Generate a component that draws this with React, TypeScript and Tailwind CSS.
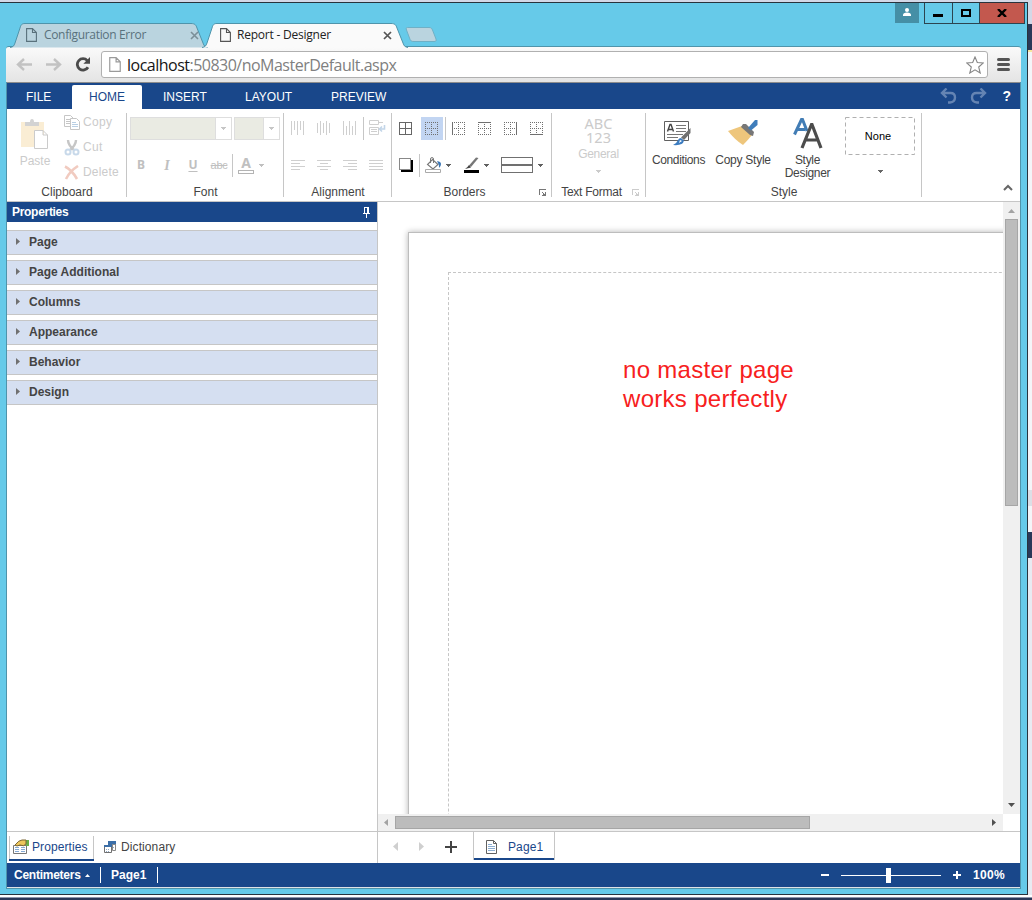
import type { ReactNode } from 'react';

const Arrow = ({ className = '' }: { className?: string }) => (
  <svg className={`shrink-0 ${className}`} width="5" height="3" viewBox="0 0 5 3" fill="currentColor" shapeRendering="crispEdges">
    <path d="M0 0h5v1h-5zM1 1h3v1h-3zM2 2h1v1h-1z" />
  </svg>
);

const Launcher = ({ className = '' }: { className?: string }) => (
  <svg className={`shrink-0 ${className}`} width="8" height="7" viewBox="0 0 8 7" fill="currentColor" shapeRendering="crispEdges">
    <path d="M0 0h7v1h-6v5h-1zM3 3h1v1h-1zM4 4h1v1h-1zM7 3v4h-4v-1h1v-1h2v-2z" />
  </svg>
);

const TabShape = ({ width, fill }: { width: number; fill: string }) => (
  <svg className="absolute left-0 top-0" width={width} height="25" fill="none">
    <path
      d={`M0 24.5 C3 24 4 23 5 20 L10 5 C11 1.5 12 .5 15 .5 H${width - 17} C${width - 13} .5 ${width - 12} 2 ${width - 11} 5 L${width - 5} 20 C${width - 4} 23 ${width - 3} 24 ${width} 24.5`}
      fill={fill}
      stroke="#4f94ab"
    />
  </svg>
);

const FileIcon = ({ className = '', w = 11, h = 14 }: { className?: string; w?: number; h?: number }) => (
  <svg className={`shrink-0 ${className}`} width={w} height={h} viewBox="0 0 11 14" fill="none" stroke="currentColor" strokeWidth="1.1">
    <path d="M.6.6H6.5L10.4 4.5V13.4H.6zM6.5.6V4.5H10.4" />
  </svg>
);

const Group = ({ width, label, pad = '', children }: { width: string; label: ReactNode; pad?: string; children: ReactNode }) => (
  <div className={`relative flex h-[84px] shrink-0 flex-col border-r border-[#c6c6c6] ${width}`}>
    <div className="h-[72px] shrink-0">{children}</div>
    <div className={`flex h-[14px] shrink-0 items-center justify-center pl-[1px] leading-[14px] ${pad}`}>{label}</div>
  </div>
);

const Sep = ({ className = '' }: { className?: string }) => <div className={`h-[23px] w-px shrink-0 self-start bg-[#c6c6c6] ${className}`} />;

const dots = 'M0 0h1v1h-1zM2 0h1v1h-1zM4 0h1v1h-1zM6 0h1v1h-1zM8 0h1v1h-1zM10 0h1v1h-1zM12 0h1v1h-1z';

// which: edge that is drawn solid, the others stay dotted
const BorderIcon = ({ which = '', className = '' }: { which?: string; className?: string }) => (
  <svg className={`shrink-0 ${className}`} width="13" height="13" viewBox="0 0 13 13" fill="#707070" shapeRendering="crispEdges">
    {[0, 6, 12].map((n) => (
      <g key={n}>
        <path d={dots} transform={`translate(0 ${n})`} />
        <path d={dots} transform={`translate(${n} 0) matrix(0 1 1 0 0 0)`} />
      </g>
    ))}
    {which === 'left' && <path d="M0 0h1v13h-1z" />}
    {which === 'right' && <path d="M12 0h1v13h-1z" />}
    {which === 'top' && <path d="M0 0h13v1h-13z" />}
    {which === 'bottom' && <path d="M0 12h13v1h-13z" />}
  </svg>
);

const AlignIcon = ({ d, className = '' }: { d: string; className?: string }) => (
  <svg className={`shrink-0 ${className}`} width="14" height="14" viewBox="0 0 14 14" stroke="#cfcfcf" fill="none" shapeRendering="crispEdges">
    <path d={d} />
  </svg>
);

const sections = ['Page', 'Page Additional', 'Columns', 'Appearance', 'Behavior', 'Design'];

const TitleBar = () => (
  <div className="relative flex h-[43px] items-start">
    <div className="relative mt-5 ml-[4px] flex h-6 w-[198px] items-center text-[#59717c]">
      <TabShape width={198} fill="#bad4df" />
      <FileIcon className="relative ml-[16px]" />
      <span className="relative ml-[7px] w-[151px] text-[12px] tracking-[-0.33px]">Configuration Error</span>
      <svg className="absolute left-[180px] top-2" width="9" height="9" stroke="#7b8f98" strokeWidth="1.6"><path d="M1 1L8 8M8 1L1 8" /></svg>
    </div>
    <div className="relative mt-5 ml-[-6px] flex h-6 w-[206px] items-center text-[#222]">
      <TabShape width={206} fill="#fafafa" />
      <FileIcon className="relative ml-[18px] text-[#555]" />
      <span className="relative ml-[6px] text-[12px] tracking-[-0.22px]">Report - Designer</span>
      <svg className="absolute left-[181px] top-2" width="9" height="9" stroke="#555" strokeWidth="1.7"><path d="M1 1L8 8M8 1L1 8" /></svg>
    </div>
    <svg className="mt-[23px] ml-[-4px]" width="34" height="17" fill="#bad4df" stroke="#6fb0c6">
      <path d="M3.500 1.500 H25 C27 1.500 27.500 2 28.500 4 L32 13 C32.500 15 32 15.500 30 15.500 H10 C7 15.500 6.500 15 5.500 12 L2.500 4 C2 2.500 2 1.500 3.500 1.500z" />
    </svg>
    <div className="mr-px ml-auto flex h-[21px]">
      <div className="mr-[5px] flex h-5 w-6 justify-center bg-[#458fa6] pt-[5px]">
        <svg width="10" height="8" fill="white"><circle cx="5" cy="2" r="2" /><path d="M1 8V7Q1 4.5 5 4.5T9 7V8z" /></svg>
      </div>
      <div className="flex w-[29px] justify-center border border-t-0 border-[#2c4450]"><div className="mt-[11px] mr-[2px] h-[3px] w-[10px] bg-black" /></div>
      <div className="flex w-[26px] justify-center border-b border-[#2c4450]"><div className="mt-[6px] h-2 w-[10px] border-2 border-black" /></div>
      <div className="mr-[1px] flex w-[46px] justify-center border border-t-0 border-[#2c4450] bg-[#c3584e]">
        <svg className="mt-[6px] mr-[1px]" width="10" height="8" stroke="black" strokeWidth="2.4"><path d="M1 0L9 8M9 0L1 8" /></svg>
      </div>
    </div>
  </div>
);

const AddressBar = () => (
  <div className="mr-1.5 flex h-9 items-center rounded-t-[3px] border-t border-[#4f94ab] bg-gradient-to-b from-[#fafafa] to-[#e4e4e4] pl-[10px]">
    <svg width="16" height="13" fill="none" stroke="#c2c2c2" strokeWidth="2.4"><path d="M16 6.5H2M8 1L2 6.5L8 12" /></svg>
    <svg className="ml-[14px]" width="16" height="13" fill="none" stroke="#c2c2c2" strokeWidth="2.4"><path d="M0 6.5H14M8 1L14 6.5L8 12" /></svg>
    <svg className="ml-[13px]" width="16" height="15" fill="none" stroke="#4b4b4b" strokeWidth="2.8">
      <path d="M13 10.2A5.7 5.7 0 1 1 12.3 3.6" /><path d="M15 0V6.8H8.4z" fill="#4b4b4b" stroke="none" />
    </svg>
    <div className="ml-[10px] flex h-[27px] w-[887px] items-center rounded-[3px] border border-[#b0b0b0] bg-white pl-[7px]">
      <FileIcon className="text-[#9a9a9a]" w={12} h={15} />
      <span className="ml-[6px] text-[16px] tracking-[-0.51px] text-[#808080]"><span className="text-[#151515]">localhost</span>:50830/noMasterDefault.aspx</span>
      <svg className="mr-[3px] ml-auto" width="18" height="18" fill="white" stroke="#858585" strokeWidth="1.1">
        <path d="M9 1L11.3 6.5L17.3 7L12.7 11L14.2 17L9 13.8L3.8 17L5.3 11L.7 7L6.7 6.5z" />
      </svg>
    </div>
    <div className="ml-[9px] flex flex-col gap-[2px]">
      <div className="h-[3px] w-[13px] rounded-sm bg-[#555]" />
      <div className="h-[3px] w-[13px] rounded-sm bg-[#555]" />
      <div className="h-[3px] w-[13px] rounded-sm bg-[#555]" />
    </div>
  </div>
);

const MenuBar = () => (
  <div className="flex h-[27px] border-t border-[#8c8c8c] bg-[#19478a] text-white">
    <span className="w-[65px] pl-[19px] leading-[28px]">FILE</span>
    <span className="mt-0.5 w-[70px] rounded-t-[2px] bg-white pl-[17px] leading-[25px] text-[#19478a]">HOME</span>
    <span className="w-[82px] pl-[21px] leading-[28px]">INSERT</span>
    <span className="w-[86px] pl-[21px] leading-[28px]">LAYOUT</span>
    <span className="pl-[21px] leading-[28px]">PREVIEW</span>
    <svg className="mt-[5px] ml-auto" width="17" height="16" fill="none" stroke="#6484b3" strokeWidth="2.4">
      <path d="M2 5H10.5Q15 5 15 9.5T10 14.5H8M6.5 .5L2 5L6.5 9.5" />
    </svg>
    <svg className="mt-[5px] ml-[13px]" width="17" height="16" fill="none" stroke="#6484b3" strokeWidth="2.4">
      <path d="M15 5H6.5Q2 5 2 9.5T7 14.5H9M10.5 .5L15 5L10.5 9.5" />
    </svg>
    <span className="mr-[9px] ml-[15px] text-[14px] leading-[27px] font-bold">?</span>
  </div>
);

const Clipboard = () => (
  <Group width="w-[120px]" label="Clipboard">
    <div className="flex text-[#cbcbcb]">
      <div className="flex w-[56px] flex-col items-center">
        <svg className="mt-[6px] mr-[1px]" width="28" height="32" viewBox="0 0 28 32">
          <path d="M0 3H23V28H0z" fill="#faedd4" />
          <path d="M4 3H9Q9 0 11 0T13 3H18V7H4z" fill="#d3d3d3" />
          <path d="M13.500 11.500H22L26.500 16V29.500H13.500zM22 11.500V16H26.500" fill="white" stroke="#cbcbcb" />
        </svg>
        <span className="mt-[2px] leading-4">Paste</span>
      </div>
      <div className="flex flex-col pl-[1px]">
        <div className="flex h-[18px] items-center">
          <svg width="16" height="15" fill="white" stroke="#c6c6c6">
            <path d="M.5.5H6.500L9.500 3.500V11.500H.5zM2 4.500H7M2 6.500H7M2 8.500H7" />
            <path d="M6.500 3.500H12.500L15.500 6.500V14.500H6.500z" /><path d="M8 7.500H12M8 9.500H14M8 11.500H14" stroke="#b9cfe4" />
          </svg>
          <span className="ml-[3px] tracking-[0.3px]">Copy</span>
        </div>
        <div className="mt-[7px] flex h-[18px] items-center">
          <svg width="16" height="17" fill="none" strokeWidth="2">
            <path d="M4 1Q4 6 10.500 11.500M12 1Q12 6 5.500 11.500" stroke="#c6c6c6" strokeWidth="2.400" />
            <circle cx="4" cy="13" r="2.500" stroke="#c8d9ea" /><circle cx="12" cy="13" r="2.500" stroke="#c8d9ea" />
          </svg>
          <span className="ml-[3px] tracking-[0.3px]">Cut</span>
        </div>
        <div className="mt-[7px] flex h-[18px] items-center">
          <svg width="16" height="15" fill="none" stroke="#f1cbc0" strokeWidth="2.600"><path d="M1 1.500Q8 5 13 14M14 1Q6 6 2 14" /></svg>
          <span className="ml-[3px] tracking-[0.2px]">Delete</span>
        </div>
      </div>
    </div>
  </Group>
);

const FontGroup = () => (
  <Group width="w-[157px]" label="Font">
    <div className="flex gap-[2px] pt-[4px] pl-[3px] text-[#c6c6c6]">
      <div className="flex h-[23px] w-[102px] justify-end border border-[#dedede] bg-[#eaebe3]">
        <div className="flex w-4 items-center justify-center border-l border-[#dedede] bg-white"><Arrow /></div>
      </div>
      <div className="flex h-[23px] w-[46px] justify-end border border-[#dedede] bg-[#eaebe3]">
        <div className="flex w-4 items-center justify-center border-l border-[#dedede] bg-white"><Arrow /></div>
      </div>
    </div>
    <div className="mt-[14px] flex h-[23px] items-center pb-[1px] pl-[1px] text-center text-[#c0c0c0]">
      <span className="w-[26px] font-['Noto_Sans',sans-serif] text-[12px] font-bold">B</span>
      <span className="w-[26px] font-['Liberation_Serif',serif] text-[14px] font-bold italic">I</span>
      <span className="w-[26px] font-['Noto_Sans',sans-serif] text-[12px] font-bold underline underline-offset-2">U</span>
      <span className="w-[26px] text-[11px] tracking-[-0.3px] line-through">abc</span>
      <Sep />
      <span className="ml-[5px] flex w-4 flex-col items-center">
        <span className="font-['Noto_Sans',sans-serif] text-[14px] leading-3 font-bold">A</span>
        <span className="mt-[1px] h-1 w-4 border border-[#b4b4b4]" />
      </span>
      <Arrow className="ml-[5px]" />
    </div>
  </Group>
);

const Alignment = () => (
  <Group width="w-[108px]" label="Alignment">
    <div className="flex items-center pt-[4px] pl-[7px]">
      <AlignIcon className="mb-[1px]" d="M.5 0V14M3.5 0V9M6.5 0V14M9.5 0V9M12.5 0V14" />
      <AlignIcon className="mb-[1px] ml-3" d="M.5 2V12M3.5 0V14M6.5 2V12M9.5 0V14M12.5 2V12" />
      <AlignIcon className="mb-[1px] ml-3" d="M.5 0V14M3.5 5V14M6.5 0V14M9.5 5V14M12.5 0V14" />
      <Sep className="ml-[6px]" />
      <svg className="mb-[1px] ml-[5px]" width="17" height="16" fill="none" stroke="#cfcfcf">
        <path d="M9 2.500H14M.5.500H9.500V4.500H.500zM.5 7.500H9.500V14.500H.5zM2 9.500H8M2 11.500H8" /><path d="M15.500 5V9H11M13 6.500L10.500 9L13 11.500" stroke="#c2d5e8" strokeWidth="1.600" />
      </svg>
    </div>
    <div className="mt-[14px] flex h-[23px] items-center gap-3 pb-[1px] pl-[7px]">
      <AlignIcon d="M0 2.500H14M0 5.500H9M0 8.500H14M0 11.500H9" />
      <AlignIcon d="M0 2.500H14M3 5.500H11M0 8.500H14M3 11.500H11" />
      <AlignIcon d="M0 2.500H14M5 5.500H14M0 8.500H14M5 11.500H14" />
      <AlignIcon d="M0 2.500H14M0 5.500H14M0 8.500H14M0 11.500H14" />
    </div>
  </Group>
);

const Borders = () => (
  <Group width="w-[160px]" pad="pr-[15px]" label={<>Borders<Launcher className="absolute right-[4px] top-[76px] text-[#777]" /></>}>
    <div className="flex items-center pt-[4px] pl-[7px]">
      <svg width="13" height="13" fill="none" stroke="#666" shapeRendering="crispEdges"><path d="M.5.5H12.500V12.500H.5zM6.500 0V13M0 6.500H13" /></svg>
      <div className="ml-[9px] flex h-[23px] w-[22px] items-center bg-[#c2d5f2] pl-[4px]"><BorderIcon /></div>
      <Sep className="ml-[2px]" />
      <BorderIcon className="ml-[6px]" which="left" />
      <BorderIcon className="ml-[13px]" which="top" />
      <BorderIcon className="ml-[13px]" which="right" />
      <BorderIcon className="ml-[13px]" which="bottom" />
    </div>
    <div className="mt-[14px] flex h-[23px] items-center pb-[1px] pl-[7px] text-[#606060]">
      <svg width="14" height="14" shapeRendering="crispEdges"><path d="M3 2H14V14H3z" /><path d="M.5.500H11.500V11.500H.500z" fill="white" stroke="#888" /><path d="M2 12H14V14H2z" /></svg>
      <Sep className="ml-[6px]" />
      <svg className="ml-[5px]" width="17" height="16" fill="none" stroke="#777">
        <path d="M7.500 2.500L13 7.500L8 12L2.500 7.500z" fill="white" strokeWidth="1.100" /><path d="M5.500 6V2Q5.500 .600 7 .600T8.500 2V6" />
        <path d="M12 4Q16 4.500 16 7T14 11Q14.500 8 12 4" fill="#3c77b5" stroke="none" /><path d="M.500 12.500H15.500V15.500H.500z" fill="white" stroke="#aaa" />
      </svg>
      <Arrow className="ml-[4px]" />
      <svg className="ml-3" width="17" height="16">
        <path d="M15.500 1L13 .500L6 8.500L8 10z" fill="#777" /><path d="M6 8L8 10.500L2 12Q4.500 10.500 6 8" fill="#444" /><path d="M1 13H16V16H1z" />
      </svg>
      <Arrow className="ml-[4px]" />
      <svg className="ml-3" width="32" height="16" fill="none" stroke="#707070" shapeRendering="crispEdges"><path d="M.500.500H31.500V15.500H.500z" /><path d="M1 8H31" strokeWidth="2" /></svg>
      <Arrow className="ml-[5px]" />
    </div>
  </Group>
);

const TextFormat = () => (
  <Group width="w-[94px]" pad="pr-[15px]" label={<><span className="tracking-[-0.25px]">Text Format</span><Launcher className="absolute right-[5px] top-[76px] text-[#ccc]" /></>}>
    <div className="flex flex-col items-center text-[#cbcbcb]">
      <span className="mt-[3px] text-center font-['Noto_Sans',sans-serif] text-[14.5px] leading-[14px]">ABC<br />123</span>
      <span className="mt-[2px] leading-4 tracking-[-0.3px]">General</span>
      <Arrow className="mt-2" />
    </div>
  </Group>
);

const Style = () => (
  <Group width="w-[276px]" label="Style">
    <div className="flex text-center leading-[13px]">
      <div className="w-[64px]">
        <svg className="mx-auto mt-[7px]" width="28" height="26">
          <path d="M.500 1.500H24.500V20.500H.500z" fill="white" stroke="#606060" />
          <path d="M12 5.500H22M12 8.500H22M12 11.500H22M3 14.500H19M3 17.500H14" stroke="#777" />
          <path d="M3.500 11.500L6 4.500H7L9.500 11.500M4.500 9.500H8.500" fill="none" stroke="#444" strokeWidth="1.400" />
          <path d="M26.500 8V13L20 20L17 17.500z" fill="#707070" /><path d="M17 18L20 20.500Q19 26 9 25Q13 23 14 20Q15 18 17 18" fill="#3c7cc0" /><path d="M16 20L18 21L15 23z" fill="white" />
        </svg>
        <span className="mt-[8px] block pl-[1px] tracking-[-0.35px] whitespace-nowrap">Conditions</span>
      </div>
      <div className="w-[65px]">
        <svg className="mx-auto mt-[7px]" width="30" height="26">
          <path d="M0 11L14 6L24 15Q20 20 15 25Q7 20 0 11" fill="#eec67c" /><path d="M15 4L18 4L26 12L25 16L22 15L13 7z" fill="#777" /><path d="M20 8L27 0H29.500V5L23 10.500z" fill="#3f7dbb" />
        </svg>
        <span className="mt-[8px] block pl-[1px] tracking-[-0.25px] whitespace-nowrap">Copy Style</span>
      </div>
      <div className="w-[65px]">
        <svg className="mx-auto mt-[5px]" width="30" height="32" fill="none">
          <path d="M1.500 16.500L8.500 1.500H9.500L14 13M4 11.500H12" stroke="#427db5" strokeWidth="3" />
          <path d="M9 30L18.500 6.500H19L28 30M12 22H25" stroke="#4c4c4c" strokeWidth="3.200" />
        </svg>
        <span className="mt-[4px] block tracking-[-0.3px]">Style<br />Designer</span>
      </div>
      <div className="flex flex-col items-center pl-[5px] text-[#666]">
        <div className="relative mt-[4px] flex h-[38px] w-[70px] items-center justify-center pr-1 text-[11px] text-black">
          <svg className="absolute inset-0" width="70" height="38" fill="none"><rect x=".5" y=".5" width="69" height="37" stroke="#b0b0b0" strokeDasharray="4 3" /></svg>
          None
        </div>
        <Arrow className="mt-[15px]" />
      </div>
    </div>
  </Group>
);

const Ribbon = () => (
  <div className="flex h-[93px] border-b border-[#c6c6c6] bg-white pt-1 text-[#444]">
    <Clipboard />
    <FontGroup />
    <Alignment />
    <Borders />
    <TextFormat />
    <Style />
    <svg className="mt-[71px] mr-[7px] ml-auto" width="10" height="7" fill="none" stroke="#666" strokeWidth="2"><path d="M1 6L5 2L9 6" /></svg>
  </div>
);

const PropertiesPanel = () => (
  <div className="w-[371px] shrink-0 border-r border-[#c6c6c6] bg-white">
    <div className="flex h-5 justify-between bg-[#19478a] pr-[7px] pl-[5px] leading-5 font-bold tracking-[-0.3px] text-white">
      Properties
      <svg className="mt-[5px]" width="7" height="11" fill="white" shapeRendering="crispEdges"><path d="M1 0h5v6h1v1h-3v4h-1v-4h-3v-1h1zM2 1v5h2v-5z" fillRule="evenodd" /></svg>
    </div>
    <div className="mt-2 flex flex-col gap-[5px]">
      {sections.map((name) => (
        <div key={name} className="flex h-[25px] items-center border-y border-[#c6c6c6] bg-[#d5dff1] pb-[2px] pl-[9px] font-bold text-[#444]">
          <svg width="4" height="7" fill="#707070"><path d="M0 0L4 3.500L0 7z" /></svg>
          <span className="ml-[9px] leading-none">{name}</span>
        </div>
      ))}
    </div>
  </div>
);

const Canvas = () => (
  <div className="flex min-w-0 flex-1 flex-col bg-white">
    <div className="flex h-[612px]">
      <div className="flex-1 overflow-hidden pt-[30px] pl-[30px]">
        <div className="h-[700px] w-[700px] border border-[#bdbdbd] bg-white pt-[39px] pl-[39px] shadow-[0_0_6px_rgba(0,0,0,0.3)]">
          <div className="h-[700px] border border-dashed border-[#c6c6c6] pt-[82px] pl-[174px] text-[24px] leading-[29px] tracking-[0.3px] text-[#f72020]">
            no master page<br />works perfectly
          </div>
        </div>
      </div>
      <div className="flex w-[17px] flex-col items-center bg-[#f0f0f0]">
        <svg className="mt-[7px] shrink-0" width="7" height="4" fill="#a3a3a3"><path d="M0 4L3.500 0L7 4z" /></svg>
        <div className="mt-[6px] h-[287px] w-[13px] shrink-0 border border-[#a6a6a6] bg-[#bcbcbc]" />
        <svg className="mt-auto mb-[7px] shrink-0" width="7" height="4" fill="#505050"><path d="M0 0L3.500 4L7 0z" /></svg>
      </div>
    </div>
    <div className="mr-[17px] flex h-[17px] items-center bg-[#f0f0f0]">
      <svg className="ml-[6px]" width="4" height="7" fill="#a3a3a3"><path d="M4 0L0 3.500L4 7z" /></svg>
      <div className="ml-[7px] h-[13px] w-[415px] border border-[#a6a6a6] bg-[#bcbcbc]" />
      <svg className="mr-[7px] ml-auto" width="4" height="7" fill="#505050"><path d="M0 0L4 3.500L0 7z" /></svg>
    </div>
  </div>
);

const TabBar = () => (
  <div className="flex h-8 border-t border-[#c6c6c6] bg-white text-[#444]">
    <div className="flex w-[371px] border-r border-[#c6c6c6] pt-1 pl-[2px]">
      <div className="flex h-[25px] w-[85px] border-x border-[#c6c6c6] text-[#19478a]">
        <div className="mx-[-1px] flex w-[85px] items-center border-b-2 border-[#19478a] pb-[2px] pl-1">
          <svg width="17" height="16">
            <path d="M.500 6.500H13.500V14.500H.500z" fill="white" stroke="#777" /><path d="M2 8.500H6M8 8.500H12M2 10.500H6M8 10.500H12M2 12.500H6M8 12.500H12" stroke="#84a9d4" />
            <path d="M13 1H16V7H13z" fill="#6ab04a" /><path d="M2 6Q6 1 9 1H13V5Q11 8 7 6L4 7z" fill="#ecc65c" stroke="#7b6634" />
          </svg>
          <span className="ml-[2px] tracking-[0.1px]">Properties</span>
        </div>
      </div>
      <div className="flex items-center pb-[5px] pl-[10px]">
        <svg width="13" height="12">
          <path d="M4 0H12V8H4z" fill="#3c6fa8" /><path d="M.500 4.500H7.500V11.500H.500z" fill="white" stroke="#707070" /><path d="M0 4H8V6H0z" fill="#3c6fa8" />
          <path d="M8.500 3.500H11.500V9.500H8.500z" fill="white" stroke="#888" /><path d="M2 8.500H6M2 10.500H6M9 6.500H11" stroke="#90a9c4" strokeDasharray="1 1" />
        </svg>
        <span className="ml-[4px] tracking-[0.1px]">Dictionary</span>
      </div>
    </div>
    <div className="flex h-[29px] items-center">
      <svg className="ml-[15px]" width="6" height="9" fill="#cfcfcf"><path d="M5 0L0 4.500L5 9z" /></svg>
      <svg className="ml-[20px]" width="6" height="9" fill="#cfcfcf"><path d="M0 0L5 4.500L0 9z" /></svg>
      <svg className="mt-[1px] ml-5" width="12" height="12" fill="#444"><path d="M5 0h2v5h5v2h-5v5h-2v-5h-5v-2h5z" /></svg>
      <div className="ml-[16px] h-[28px] w-[82px] self-start border-x border-[#c6c6c6] text-[#19478a]">
        <div className="flex h-full items-center border-b-2 border-[#19478a] pt-[3px] pl-3">
          <svg width="11" height="14" fill="white" stroke="#606060"><path d="M.500.500H7.500L10.500 3.500V13.500H.500zM7.500.500V3.500H10.500" /><path d="M2 4.500H6M2 6.500H9M2 8.500H9M2 10.500H9" stroke="#8daed2" /></svg>
          <span className="ml-[11px] tracking-[0.1px]">Page1</span>
        </div>
      </div>
    </div>
  </div>
);

const StatusBar = () => (
  <div className="flex h-6 items-center bg-[#19478a] text-[12px] font-bold text-white">
    <span className="ml-[7px] w-[70px] tracking-[-0.25px] whitespace-nowrap">Centimeters</span>
    <svg className="ml-[1px]" width="5" height="3" fill="white"><path d="M0 3L2.500 0L5 3z" /></svg>
    <div className="ml-[10px] h-4 w-px bg-white" />
    <span className="ml-[10px] w-[46px]">Page1</span>
    <div className="h-4 w-px bg-white" />
    <div className="ml-auto h-[2px] w-2 bg-white" />
    <div className="ml-3 flex h-4 w-[100px] items-center">
      <div className="h-px w-[45px] bg-white" />
      <div className="h-[15px] w-[5px] bg-white" />
      <div className="h-px w-[50px] bg-white" />
    </div>
    <svg className="ml-3" width="8" height="8" fill="white"><path d="M3 0h2v3h3v2h-3v3h-2v-3h-3v-2h3z" /></svg>
    <span className="mr-[15px] ml-[12px] tracking-[0.3px]">100%</span>
  </div>
);

const App = () => (
  <div className="flex h-[900px] w-[1032px] flex-col overflow-hidden bg-[#d3d8e7] font-['Liberation_Sans',Arial,sans-serif] text-[12px] whitespace-nowrap">
    <div className="h-[2px] shrink-0" />
    <div className="flex h-[893px] shrink-0">
      <div className="w-[1028px] border-y border-r border-[#28333d] bg-[#66cae9] pl-[6px]">
        <div className="font-['Open_Sans',sans-serif]">
          <TitleBar />
          <AddressBar />
        </div>
        <div className="mr-[6px] border-x border-b border-[#4f94ab] bg-white">
          <MenuBar />
          <Ribbon />
          <div className="flex h-[629px]">
            <PropertiesPanel />
            <Canvas />
          </div>
          <TabBar />
          <StatusBar />
          <div className="h-px bg-[#dfe3e6]" />
        </div>
      </div>
      <div className="w-1">
        <div className="h-[22px] bg-[#d3d8e7]" />
        <div className="h-[26px] bg-[#2a3858]" />
        <div className="h-[2px] bg-[#f7e7a0]" />
        <div className="h-[438px] bg-[#f4f5f8]" />
        <div className="h-4 bg-[#dcdfe6]" />
        <div className="h-[26px] bg-[#f4f5f8]" />
        <div className="h-[26px] bg-[#2a3858]" />
        <div className="h-[337px] bg-[#e8ebf2]" />
      </div>
    </div>
    <div className="h-[2px] shrink-0 bg-white" />
    <div className="h-px shrink-0 bg-[#8f97ac]" />
    <div className="h-[2px] shrink-0 bg-[#2a3858]" />
  </div>
);

export default App;
